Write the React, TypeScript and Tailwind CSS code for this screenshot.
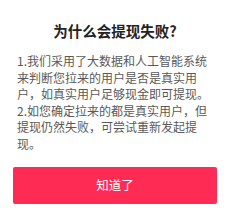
export default function App() {
  return (
    <div
      className="flex h-[219px] w-[230px] flex-col bg-white"
      style={{ fontFamily: '"Noto Sans CJK SC", "Noto Sans", sans-serif' }}
    >
      <div className="pt-[21px] text-center text-[14.5px] font-bold leading-[20px] text-[#222]">
        为什么会提现失败?
      </div>
      <div className="mt-[12px] pl-[17px] pr-[19px] text-[12px] leading-[16.5px] text-[#595959]">
        1.我们采用了大数据和人工智能系统来判断您拉来的用户是否是真实用户，如真实用户足够现金即可提现。
        <br />
        2.如您确定拉来的都是真实用户，但提现仍然失败，可尝试重新发起提现。
      </div>
      <button className="mx-[13px] mt-[15px] h-[37px] rounded-[2px] bg-[#fe2c55] text-[12.5px] text-white">
        知道了
      </button>
    </div>
  )
}
